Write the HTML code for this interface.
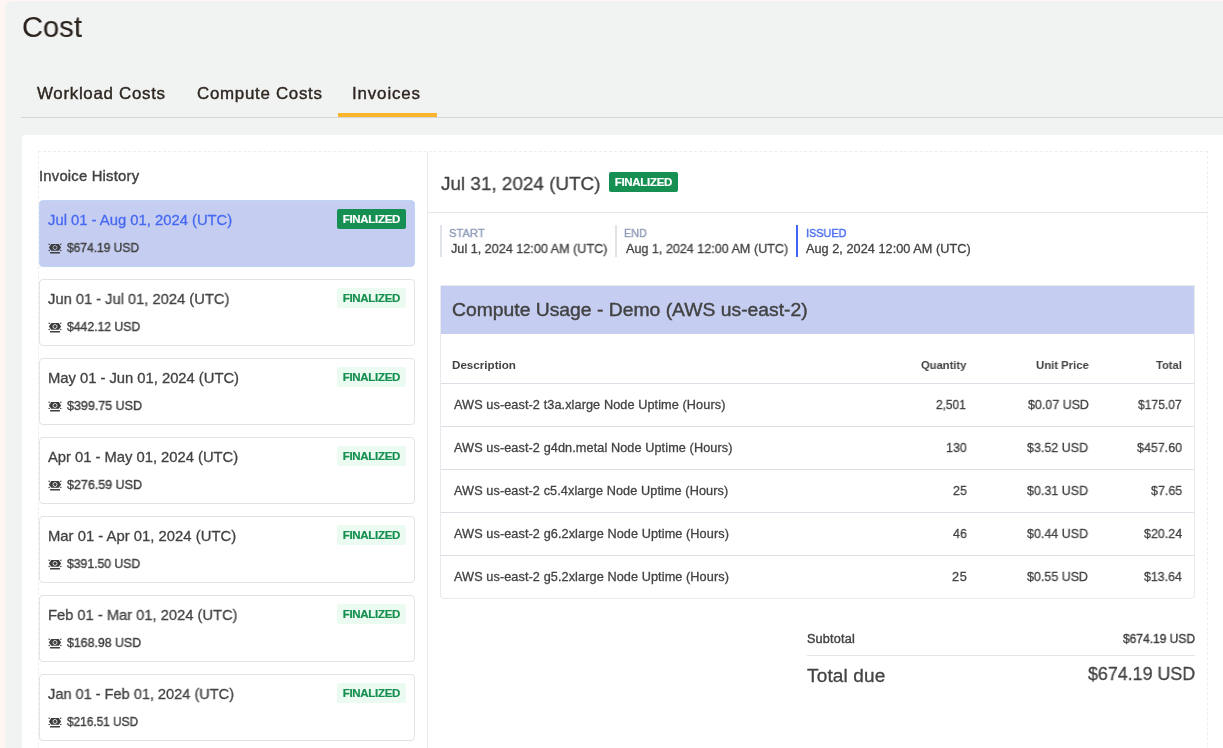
<!DOCTYPE html>
<html><head><meta charset="utf-8">
<style>
*{box-sizing:border-box;margin:0;padding:0}
html,body{width:1223px;height:748px;overflow:hidden;background:#fdf6f3;font-family:"Liberation Sans",sans-serif;color:#3d3d3d}
.a{position:absolute;white-space:nowrap;line-height:1;will-change:transform}
.mk{display:inline-block;width:0;height:0}
.b{position:absolute}
#panel{left:5px;top:1px;width:1400px;height:900px;background:#f1f3f2;border-radius:8px}
#tabline{left:21px;top:117px;width:1300px;height:1px;background:#d5d6d5}
#tabul{left:338px;top:113px;width:99px;height:4px;background:#fbb42e}
#card{left:22px;top:135px;width:1300px;height:800px;background:#fff;border-radius:3px}
#dash{left:38px;top:151px;width:1170px;height:800px;border:1px dashed #eeeeee}
#vline{left:427px;top:152px;width:1px;height:700px;background:#e9e9e9}
.inv{left:39px;width:376px;height:67px;border:1px solid #e3e3e3;border-radius:4px;background:#fff}
.inv.sel{background:#c5cdf0;border-color:#bfd5f8;height:67px}
.ic{position:absolute;left:48px}
.badge{position:absolute;left:337px;width:69px;height:20px;border-radius:2px;background:#ebfbf1;color:#148f4f;font-size:11.5px;font-weight:bold;line-height:20px;text-align:center;letter-spacing:-0.3px;text-indent:-0.3px;will-change:transform;-webkit-text-stroke:0.2px currentColor}
.badge.dk{background:#158f52;color:#fff}
#hr1{left:428px;top:212px;width:779px;height:1px;background:#e6e6e6}
.bar{top:225px;width:2px;height:32px;background:#e0e3e8}
#tbl{left:440px;top:285px;width:755px;height:314px;border:1px solid #e9eaef;border-radius:1px 1px 4px 4px;overflow:hidden}
#thead{left:0;top:-1px;width:100%;height:49px;background:#c5cdf0}
.rl{left:0;width:100%;height:1px;background:#dcdfe5}
</style></head><body>
<div class="b" id="panel"></div>
<div class="b" id="tabline"></div>
<div class="b" id="tabul"></div>
<div class="b" id="card"></div>
<div class="b" id="dash"></div>
<div class="b" id="vline"></div>
<div class="b inv sel" style="top:200px"></div>
<svg class="ic" style="top:243px" viewBox="0 0 14 11" width="14" height="11"><path d="M0.9 4.5L3.2 1.1H10.8L13.1 4.5L10.8 7.8H3.2Z" fill="#3d3d3d"/><circle cx="1.2" cy="1.3" r="0.75" fill="#3d3d3d"/><circle cx="12.8" cy="1.3" r="0.75" fill="#3d3d3d"/><circle cx="1.2" cy="7.6" r="0.75" fill="#3d3d3d"/><circle cx="12.8" cy="7.6" r="0.75" fill="#3d3d3d"/><circle cx="7" cy="4.5" r="2.0" fill="none" stroke="#c5cdf0" stroke-width="0.8"/><rect x="2" y="9.1" width="10" height="1.5" rx="0.4" fill="#3d3d3d"/></svg>
<div class="badge dk" style="top:209px">FINALIZED</div>
<div class="b inv" style="top:279px"></div>
<svg class="ic" style="top:322px" viewBox="0 0 14 11" width="14" height="11"><path d="M0.9 4.5L3.2 1.1H10.8L13.1 4.5L10.8 7.8H3.2Z" fill="#3d3d3d"/><circle cx="1.2" cy="1.3" r="0.75" fill="#3d3d3d"/><circle cx="12.8" cy="1.3" r="0.75" fill="#3d3d3d"/><circle cx="1.2" cy="7.6" r="0.75" fill="#3d3d3d"/><circle cx="12.8" cy="7.6" r="0.75" fill="#3d3d3d"/><circle cx="7" cy="4.5" r="2.0" fill="none" stroke="#fff" stroke-width="0.8"/><rect x="2" y="9.1" width="10" height="1.5" rx="0.4" fill="#3d3d3d"/></svg>
<div class="badge" style="top:288px">FINALIZED</div>
<div class="b inv" style="top:358px"></div>
<svg class="ic" style="top:401px" viewBox="0 0 14 11" width="14" height="11"><path d="M0.9 4.5L3.2 1.1H10.8L13.1 4.5L10.8 7.8H3.2Z" fill="#3d3d3d"/><circle cx="1.2" cy="1.3" r="0.75" fill="#3d3d3d"/><circle cx="12.8" cy="1.3" r="0.75" fill="#3d3d3d"/><circle cx="1.2" cy="7.6" r="0.75" fill="#3d3d3d"/><circle cx="12.8" cy="7.6" r="0.75" fill="#3d3d3d"/><circle cx="7" cy="4.5" r="2.0" fill="none" stroke="#fff" stroke-width="0.8"/><rect x="2" y="9.1" width="10" height="1.5" rx="0.4" fill="#3d3d3d"/></svg>
<div class="badge" style="top:367px">FINALIZED</div>
<div class="b inv" style="top:437px"></div>
<svg class="ic" style="top:480px" viewBox="0 0 14 11" width="14" height="11"><path d="M0.9 4.5L3.2 1.1H10.8L13.1 4.5L10.8 7.8H3.2Z" fill="#3d3d3d"/><circle cx="1.2" cy="1.3" r="0.75" fill="#3d3d3d"/><circle cx="12.8" cy="1.3" r="0.75" fill="#3d3d3d"/><circle cx="1.2" cy="7.6" r="0.75" fill="#3d3d3d"/><circle cx="12.8" cy="7.6" r="0.75" fill="#3d3d3d"/><circle cx="7" cy="4.5" r="2.0" fill="none" stroke="#fff" stroke-width="0.8"/><rect x="2" y="9.1" width="10" height="1.5" rx="0.4" fill="#3d3d3d"/></svg>
<div class="badge" style="top:446px">FINALIZED</div>
<div class="b inv" style="top:516px"></div>
<svg class="ic" style="top:559px" viewBox="0 0 14 11" width="14" height="11"><path d="M0.9 4.5L3.2 1.1H10.8L13.1 4.5L10.8 7.8H3.2Z" fill="#3d3d3d"/><circle cx="1.2" cy="1.3" r="0.75" fill="#3d3d3d"/><circle cx="12.8" cy="1.3" r="0.75" fill="#3d3d3d"/><circle cx="1.2" cy="7.6" r="0.75" fill="#3d3d3d"/><circle cx="12.8" cy="7.6" r="0.75" fill="#3d3d3d"/><circle cx="7" cy="4.5" r="2.0" fill="none" stroke="#fff" stroke-width="0.8"/><rect x="2" y="9.1" width="10" height="1.5" rx="0.4" fill="#3d3d3d"/></svg>
<div class="badge" style="top:525px">FINALIZED</div>
<div class="b inv" style="top:595px"></div>
<svg class="ic" style="top:638px" viewBox="0 0 14 11" width="14" height="11"><path d="M0.9 4.5L3.2 1.1H10.8L13.1 4.5L10.8 7.8H3.2Z" fill="#3d3d3d"/><circle cx="1.2" cy="1.3" r="0.75" fill="#3d3d3d"/><circle cx="12.8" cy="1.3" r="0.75" fill="#3d3d3d"/><circle cx="1.2" cy="7.6" r="0.75" fill="#3d3d3d"/><circle cx="12.8" cy="7.6" r="0.75" fill="#3d3d3d"/><circle cx="7" cy="4.5" r="2.0" fill="none" stroke="#fff" stroke-width="0.8"/><rect x="2" y="9.1" width="10" height="1.5" rx="0.4" fill="#3d3d3d"/></svg>
<div class="badge" style="top:604px">FINALIZED</div>
<div class="b inv" style="top:674px"></div>
<svg class="ic" style="top:717px" viewBox="0 0 14 11" width="14" height="11"><path d="M0.9 4.5L3.2 1.1H10.8L13.1 4.5L10.8 7.8H3.2Z" fill="#3d3d3d"/><circle cx="1.2" cy="1.3" r="0.75" fill="#3d3d3d"/><circle cx="12.8" cy="1.3" r="0.75" fill="#3d3d3d"/><circle cx="1.2" cy="7.6" r="0.75" fill="#3d3d3d"/><circle cx="12.8" cy="7.6" r="0.75" fill="#3d3d3d"/><circle cx="7" cy="4.5" r="2.0" fill="none" stroke="#fff" stroke-width="0.8"/><rect x="2" y="9.1" width="10" height="1.5" rx="0.4" fill="#3d3d3d"/></svg>
<div class="badge" style="top:683px">FINALIZED</div>
<div class="badge dk" style="left:609px;top:172px">FINALIZED</div>
<div class="b" id="hr1"></div>
<div class="b bar" style="left:440px"></div>
<div class="b bar" style="left:615px"></div>
<div class="b bar" style="left:796px;background:#3f66f6"></div>
<div class="b" id="tbl"><div class="b" id="thead"></div>
<div class="b rl" style="top:97px"></div>
<div class="b rl" style="top:140px"></div>
<div class="b rl" style="top:183px"></div>
<div class="b rl" style="top:226px"></div>
<div class="b rl" style="top:269px"></div>
</div>
<div class="b" style="left:807px;top:655px;width:388px;height:1px;background:#e6e6e6"></div>
<div class="a" id="t0" style="left:21.80px;top:11.81px;font-size:29.60px;-webkit-text-stroke:0.1px currentColor;color:#2b231d;letter-spacing:0.000px;transform:scaleX(0.9853);transform-origin:0 0;">Cost</div>
<div class="a" id="t1" style="left:37.30px;top:85.91px;font-size:16.91px;-webkit-text-stroke:0.4px currentColor;color:#2e2620;letter-spacing:0.692px;">Workload Costs</div>
<div class="a" id="t2" style="left:196.60px;top:85.91px;font-size:16.91px;-webkit-text-stroke:0.4px currentColor;color:#2e2620;letter-spacing:0.700px;">Compute Costs</div>
<div class="a" id="t3" style="left:352.40px;top:85.91px;font-size:16.91px;-webkit-text-stroke:0.4px currentColor;color:#2e2620;letter-spacing:0.857px;">Invoices</div>
<div class="a" id="t4" style="left:38.70px;top:169.01px;font-size:14.80px;-webkit-text-stroke:0.4px currentColor;color:#424242;letter-spacing:0.214px;">Invoice History</div>
<div class="a" id="t5" style="left:48.40px;top:212.91px;font-size:14.80px;-webkit-text-stroke:0.3px currentColor;color:#4668f2;letter-spacing:0.000px;">Jul 01 - Aug 01, 2024 (UTC)</div>
<div class="a" id="t6" style="left:66.60px;top:241.50px;font-size:12.68px;-webkit-text-stroke:0.4px currentColor;color:#424242;letter-spacing:0.000px;transform:scaleX(0.9464);transform-origin:0 0;">$674.19 USD</div>
<div class="a" id="t7" style="left:48.40px;top:291.91px;font-size:14.80px;-webkit-text-stroke:0.3px currentColor;color:#424242;letter-spacing:0.000px;transform:scaleX(0.9929);transform-origin:0 0;">Jun 01 - Jul 01, 2024 (UTC)</div>
<div class="a" id="t8" style="left:66.60px;top:320.50px;font-size:12.68px;-webkit-text-stroke:0.4px currentColor;color:#424242;letter-spacing:0.000px;transform:scaleX(0.9611);transform-origin:0 0;">$442.12 USD</div>
<div class="a" id="t9" style="left:47.70px;top:370.91px;font-size:14.80px;-webkit-text-stroke:0.3px currentColor;color:#424242;letter-spacing:-0.023px;">May 01 - Jun 01, 2024 (UTC)</div>
<div class="a" id="t10" style="left:66.60px;top:399.50px;font-size:12.68px;-webkit-text-stroke:0.4px currentColor;color:#424242;letter-spacing:0.000px;transform:scaleX(0.9850);transform-origin:0 0;">$399.75 USD</div>
<div class="a" id="t11" style="left:48.40px;top:449.91px;font-size:14.80px;-webkit-text-stroke:0.3px currentColor;color:#424242;letter-spacing:-0.023px;">Apr 01 - May 01, 2024 (UTC)</div>
<div class="a" id="t12" style="left:66.60px;top:478.50px;font-size:12.68px;-webkit-text-stroke:0.4px currentColor;color:#424242;letter-spacing:0.000px;transform:scaleX(0.9850);transform-origin:0 0;">$276.59 USD</div>
<div class="a" id="t13" style="left:47.70px;top:528.91px;font-size:14.80px;-webkit-text-stroke:0.3px currentColor;color:#424242;letter-spacing:0.023px;">Mar 01 - Apr 01, 2024 (UTC)</div>
<div class="a" id="t14" style="left:66.60px;top:557.50px;font-size:12.68px;-webkit-text-stroke:0.4px currentColor;color:#424242;letter-spacing:0.000px;transform:scaleX(0.9611);transform-origin:0 0;">$391.50 USD</div>
<div class="a" id="t15" style="left:47.70px;top:607.91px;font-size:14.80px;-webkit-text-stroke:0.3px currentColor;color:#424242;letter-spacing:0.000px;transform:scaleX(0.9930);transform-origin:0 0;">Feb 01 - Mar 01, 2024 (UTC)</div>
<div class="a" id="t16" style="left:66.60px;top:636.50px;font-size:12.68px;-webkit-text-stroke:0.4px currentColor;color:#424242;letter-spacing:0.000px;transform:scaleX(0.9733);transform-origin:0 0;">$168.98 USD</div>
<div class="a" id="t17" style="left:48.40px;top:686.91px;font-size:14.80px;-webkit-text-stroke:0.3px currentColor;color:#424242;letter-spacing:0.000px;transform:scaleX(0.9833);transform-origin:0 0;">Jan 01 - Feb 01, 2024 (UTC)</div>
<div class="a" id="t18" style="left:66.60px;top:715.50px;font-size:12.68px;-webkit-text-stroke:0.4px currentColor;color:#424242;letter-spacing:0.000px;transform:scaleX(0.9336);transform-origin:0 0;">$216.51 USD</div>
<div class="a" id="t19" style="left:441.10px;top:174.01px;font-size:19.03px;-webkit-text-stroke:0.3px currentColor;color:#424242;letter-spacing:0.000px;transform:scaleX(0.9928);transform-origin:0 0;">Jul 31, 2024 (UTC)</div>
<div class="a" id="t20" style="left:449.30px;top:227.01px;font-size:11.63px;-webkit-text-stroke:0.4px currentColor;color:#8e9cb7;letter-spacing:0.000px;transform:scaleX(0.9625);transform-origin:0 0;">START</div>
<div class="a" id="t21" style="left:624.30px;top:227.01px;font-size:11.63px;-webkit-text-stroke:0.4px currentColor;color:#8e9cb7;letter-spacing:0.000px;transform:scaleX(0.9269);transform-origin:0 0;">END</div>
<div class="a" id="t22" style="left:805.50px;top:227.01px;font-size:11.63px;-webkit-text-stroke:0.4px currentColor;color:#4668f2;letter-spacing:0.000px;transform:scaleX(0.9313);transform-origin:0 0;">ISSUED</div>
<div class="a" id="t23" style="left:450.70px;top:242.80px;font-size:12.68px;-webkit-text-stroke:0.3px currentColor;color:#424242;letter-spacing:0.000px;transform:scaleX(0.9961);transform-origin:0 0;">Jul 1, 2024 12:00 AM (UTC)</div>
<div class="a" id="t24" style="left:625.60px;top:242.80px;font-size:12.68px;-webkit-text-stroke:0.3px currentColor;color:#424242;letter-spacing:0.000px;transform:scaleX(0.9918);transform-origin:0 0;">Aug 1, 2024 12:00 AM (UTC)</div>
<div class="a" id="t25" style="left:806.30px;top:242.80px;font-size:12.68px;-webkit-text-stroke:0.3px currentColor;color:#424242;letter-spacing:0.048px;">Aug 2, 2024 12:00 AM (UTC)</div>
<div class="a" id="t26" style="left:452.30px;top:300.21px;font-size:19.03px;-webkit-text-stroke:0.4px currentColor;color:#424242;letter-spacing:0.000px;transform:scaleX(1.0159);transform-origin:0 0;">Compute Usage - Demo (AWS us-east-2)</div>
<div class="a" id="t27" style="left:452.30px;top:359.01px;font-size:11.63px;font-weight:bold;color:#424242;letter-spacing:0.000px;transform:scaleX(0.9941);transform-origin:0 0;">Description</div>
<div class="a" id="t28" style="left:920.80px;top:359.01px;font-size:11.63px;font-weight:bold;color:#424242;letter-spacing:0.000px;transform:scaleX(0.9615);transform-origin:0 0;">Quantity</div>
<div class="a" id="t29" style="left:1035.90px;top:359.01px;font-size:11.63px;font-weight:bold;color:#424242;letter-spacing:0.000px;transform:scaleX(0.9749);transform-origin:0 0;">Unit Price</div>
<div class="a" id="t30" style="left:1155.60px;top:359.01px;font-size:11.63px;font-weight:bold;color:#424242;letter-spacing:0.000px;transform:scaleX(0.9593);transform-origin:0 0;">Total</div>
<div class="a" id="t31" style="left:453.70px;top:398.80px;font-size:12.68px;-webkit-text-stroke:0.3px currentColor;color:#424242;letter-spacing:0.098px;">AWS us-east-2 t3a.xlarge Node Uptime (Hours)</div>
<div class="a" id="t32" style="left:936.30px;top:398.80px;font-size:12.68px;-webkit-text-stroke:0.3px currentColor;color:#424242;letter-spacing:0.000px;transform:scaleX(0.9379);transform-origin:0 0;">2,501</div>
<div class="a" id="t33" style="left:1027.50px;top:398.80px;font-size:12.68px;-webkit-text-stroke:0.3px currentColor;color:#424242;letter-spacing:0.000px;transform:scaleX(0.9828);transform-origin:0 0;">$0.07 USD</div>
<div class="a" id="t34" style="left:1138.40px;top:398.80px;font-size:12.68px;-webkit-text-stroke:0.3px currentColor;color:#424242;letter-spacing:0.000px;transform:scaleX(0.9523);transform-origin:0 0;">$175.07</div>
<div class="a" id="t35" style="left:453.70px;top:441.80px;font-size:12.68px;-webkit-text-stroke:0.3px currentColor;color:#424242;letter-spacing:0.098px;">AWS us-east-2 g4dn.metal Node Uptime (Hours)</div>
<div class="a" id="t36" style="left:945.60px;top:441.80px;font-size:12.68px;-webkit-text-stroke:0.3px currentColor;color:#424242;letter-spacing:0.100px;transform:scaleX(0.9718);transform-origin:0 0;">130</div>
<div class="a" id="t37" style="left:1026.90px;top:441.80px;font-size:12.68px;-webkit-text-stroke:0.3px currentColor;color:#424242;letter-spacing:0.100px;transform:scaleX(0.9718);transform-origin:0 0;">$3.52 USD</div>
<div class="a" id="t38" style="left:1136.50px;top:441.80px;font-size:12.68px;-webkit-text-stroke:0.3px currentColor;color:#424242;letter-spacing:0.100px;transform:scaleX(0.9718);transform-origin:0 0;">$457.60</div>
<div class="a" id="t39" style="left:453.70px;top:484.80px;font-size:12.68px;-webkit-text-stroke:0.3px currentColor;color:#424242;letter-spacing:0.098px;">AWS us-east-2 c5.4xlarge Node Uptime (Hours)</div>
<div class="a" id="t40" style="left:952.60px;top:484.80px;font-size:12.68px;-webkit-text-stroke:0.3px currentColor;color:#424242;letter-spacing:0.100px;transform:scaleX(0.9718);transform-origin:0 0;">25</div>
<div class="a" id="t41" style="left:1026.90px;top:484.80px;font-size:12.68px;-webkit-text-stroke:0.3px currentColor;color:#424242;letter-spacing:0.100px;transform:scaleX(0.9718);transform-origin:0 0;">$0.31 USD</div>
<div class="a" id="t42" style="left:1150.50px;top:484.80px;font-size:12.68px;-webkit-text-stroke:0.3px currentColor;color:#424242;letter-spacing:0.100px;transform:scaleX(0.9718);transform-origin:0 0;">$7.65</div>
<div class="a" id="t43" style="left:453.70px;top:527.80px;font-size:12.68px;-webkit-text-stroke:0.3px currentColor;color:#424242;letter-spacing:0.098px;">AWS us-east-2 g6.2xlarge Node Uptime (Hours)</div>
<div class="a" id="t44" style="left:952.60px;top:527.80px;font-size:12.68px;-webkit-text-stroke:0.3px currentColor;color:#424242;letter-spacing:0.100px;transform:scaleX(0.9718);transform-origin:0 0;">46</div>
<div class="a" id="t45" style="left:1026.90px;top:527.80px;font-size:12.68px;-webkit-text-stroke:0.3px currentColor;color:#424242;letter-spacing:0.100px;transform:scaleX(0.9718);transform-origin:0 0;">$0.44 USD</div>
<div class="a" id="t46" style="left:1143.50px;top:527.80px;font-size:12.68px;-webkit-text-stroke:0.3px currentColor;color:#424242;letter-spacing:0.100px;transform:scaleX(0.9718);transform-origin:0 0;">$20.24</div>
<div class="a" id="t47" style="left:453.70px;top:570.80px;font-size:12.68px;-webkit-text-stroke:0.3px currentColor;color:#424242;letter-spacing:0.098px;">AWS us-east-2 g5.2xlarge Node Uptime (Hours)</div>
<div class="a" id="t48" style="left:951.70px;top:570.80px;font-size:12.68px;-webkit-text-stroke:0.3px currentColor;color:#424242;letter-spacing:0.600px;">25</div>
<div class="a" id="t49" style="left:1027.30px;top:570.80px;font-size:12.68px;-webkit-text-stroke:0.3px currentColor;color:#424242;letter-spacing:0.000px;transform:scaleX(0.9835);transform-origin:0 0;">$0.55 USD</div>
<div class="a" id="t50" style="left:1143.60px;top:570.80px;font-size:12.68px;-webkit-text-stroke:0.3px currentColor;color:#424242;letter-spacing:0.000px;transform:scaleX(0.9744);transform-origin:0 0;">$13.64</div>
<div class="a" id="t51" style="left:806.70px;top:632.90px;font-size:12.68px;-webkit-text-stroke:0.4px currentColor;color:#424242;letter-spacing:0.171px;">Subtotal</div>
<div class="a" id="t52" style="left:1122.80px;top:632.90px;font-size:12.68px;-webkit-text-stroke:0.4px currentColor;color:#424242;letter-spacing:0.000px;transform:scaleX(0.9460);transform-origin:0 0;">$674.19 USD</div>
<div class="a" id="t53" style="left:807.40px;top:665.81px;font-size:19.03px;-webkit-text-stroke:0.3px currentColor;color:#424242;letter-spacing:0.150px;">Total due</div>
<div class="a" id="t54" style="left:1087.50px;top:663.91px;font-size:19.03px;-webkit-text-stroke:0.3px currentColor;color:#424242;letter-spacing:0.000px;transform:scaleX(0.9382);transform-origin:0 0;">$674.19 USD</div>
</body></html>
